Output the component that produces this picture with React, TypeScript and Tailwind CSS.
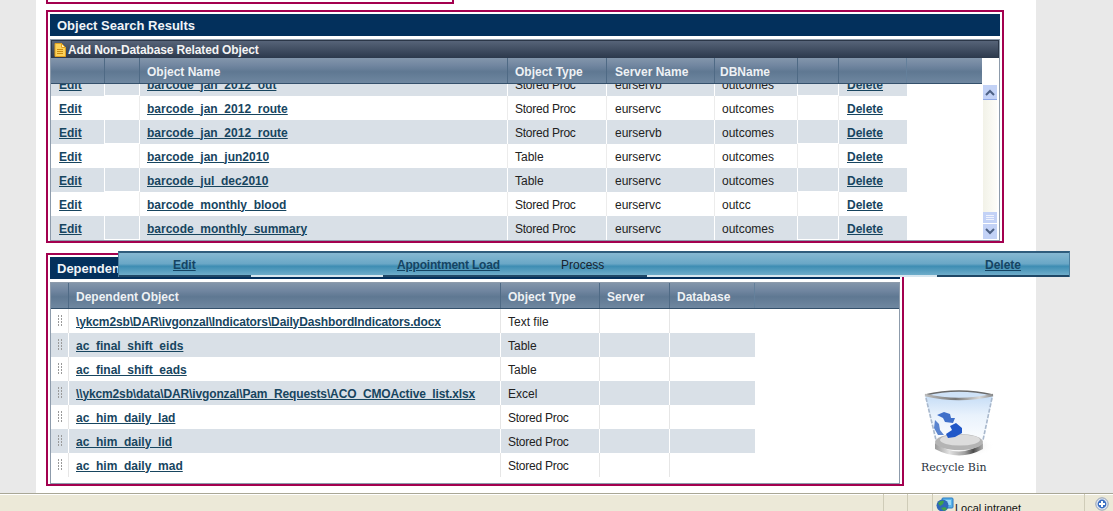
const headerBg = 'bg-[linear-gradient(#8396ab,#7186a0_30%,#5f7892_55%,#6f87a0)]';

const objects = [
  ['barcode_jan_2012_out', 'Stored Proc', 'eurservb', 'outcomes'],
  ['barcode_jan_2012_route', 'Stored Proc', 'eurservc', 'outcomes'],
  ['barcode_jan_2012_route', 'Stored Proc', 'eurservb', 'outcomes'],
  ['barcode_jan_jun2010', 'Table', 'eurservc', 'outcomes'],
  ['barcode_jul_dec2010', 'Table', 'eurservc', 'outcomes'],
  ['barcode_monthly_blood', 'Stored Proc', 'eurservc', 'outcc'],
  ['barcode_monthly_summary', 'Stored Proc', 'eurservc', 'outcomes'],
];

const dependents = [
  ['\\ykcm2sb\\DAR\\ivgonzal\\Indicators\\DailyDashbordIndicators.docx', 'Text file'],
  ['ac_final_shift_eids', 'Table'],
  ['ac_final_shift_eads', 'Table'],
  ['\\\\ykcm2sb\\data\\DAR\\ivgonzal\\Pam_Requests\\ACO_CMOActive_list.xlsx', 'Excel'],
  ['ac_him_daily_lad', 'Stored Proc'],
  ['ac_him_daily_lid', 'Stored Proc'],
  ['ac_him_daily_mad', 'Stored Proc'],
];

function typeClass(type: string) {
  return type === 'Stored Proc' ? 'tracking-[-0.25px]' : '';
}

function DocIcon() {
  return (
    <svg width="12" height="14" viewBox="0 0 12 14" className="mr-[2px] shrink-0">
      <path d="M1 .5h6.5L11.5 4.5V13.5H1Z" fill="#fbd25a" stroke="#e0a020" />
      <path d="M7.5 .5V4.5H11.5Z" fill="#fff2b8" stroke="#e0a020" />
      <path d="M3 6.5h6M3 8.5h6M3 10.5h6" stroke="#c98a10" strokeWidth="1" />
    </svg>
  );
}

function Grip() {
  const dots = [];
  for (let y = 0; y < 4; y++) {
    dots.push(<rect key={'a' + y} x="0" y={y * 3} width="1" height="2" fill="#9a9a9a" />);
    dots.push(<rect key={'b' + y} x="3" y={y * 3} width="1" height="2" fill="#9a9a9a" />);
  }
  return (
    <svg width="4" height="12" className="block">
      {dots}
    </svg>
  );
}

function Chevron({ up }: { up?: boolean }) {
  return (
    <svg width="10" height="7" viewBox="0 0 10 7">
      <path d={up ? 'M1 6l4-4 4 4' : 'M1 1l4 4 4-4'} fill="none" stroke="#4d6185" strokeWidth="2" />
    </svg>
  );
}

function Scrollbar() {
  return (
    <div className="flex w-[17px] flex-1 flex-col bg-white pl-px pr-[2px] pt-px">
      <div className="flex h-[15px] items-center justify-center border-b border-b-[#8fa8e6] bg-[#c3d2f6]">
        <Chevron up />
      </div>
      <div className="flex-1 bg-[linear-gradient(90deg,#f2f2e8,#fdfdf9)]" />
      <div className="flex h-[11px] flex-col justify-center gap-px bg-[#c3d2f6] px-[3px]">
        <div className="h-px bg-[#eef2fd]" />
        <div className="h-px bg-[#eef2fd]" />
        <div className="h-px bg-[#eef2fd]" />
      </div>
      <div className="mt-px mb-px flex h-[15px] items-center justify-center bg-[#c3d2f6]">
        <Chevron />
      </div>
    </div>
  );
}

function Title({ text }: { text: string }) {
  return (
    <div className="flex h-[22px] items-center bg-[#03305c] pl-[7px] pt-[2px] text-[13px] font-bold text-[#f0f4f8]">
      {text}
    </div>
  );
}

function HeaderCell({ w, text, pl = 'pl-2', line = 'border-r-[#4f6a85]' }: { w: string; text?: string; pl?: string; line?: string }) {
  return <div className={`${w} ${pl} ${line} flex h-full shrink-0 items-center border-r pt-[2px]`}>{text}</div>;
}

function ObjectResults() {
  return (
    <div className="h-[233px] w-[958px] shrink-0 border-2 border-[#a3004f] p-[2px]">
      <Title text="Object Search Results" />
      <div className="mt-[3px] h-[202px] border border-[#8d9bab]">
        <div className="flex h-[18px] items-center border-x border-t border-[#2b3647] bg-[linear-gradient(#566378,#2c394c)] pl-[2px] text-xs font-bold tracking-[-0.13px] text-[#f4f4f4]">
          <DocIcon />
          Add Non-Database Related Object
        </div>
        <div className="flex h-[182px]">
          <div className="flex w-[931px] flex-col">
            <div className={`flex h-[26px] shrink-0 border-b border-b-[#34506b] text-xs font-bold text-[#eef1f4] ${headerBg}`}>
              <HeaderCell w="w-[54px]" />
              <HeaderCell w="w-[35px]" />
              <HeaderCell w="w-[368px]" pl="pl-[7px]" text="Object Name" />
              <HeaderCell w="w-[99px]" pl="pl-[7px]" text="Object Type" />
              <HeaderCell w="w-[108px]" text="Server Name" />
              <HeaderCell w="w-[83px]" pl="pl-[5px]" text="DBName" />
              <HeaderCell w="w-[41px]" />
              <HeaderCell w="w-[68px]" line="border-r-[#64809b]" />
            </div>
            <div className="flex h-[156px] flex-col justify-end overflow-hidden text-xs text-[#222]">
              {objects.map((row, i) => {
                const alt = i % 2 === 0;
                const line = alt ? 'border-r-white' : 'border-r-[#ececec]';
                const cell = `flex h-full shrink-0 items-center border-r pt-px ${line}`;
                const link = 'font-bold text-[#17455f] underline';
                return (
                  <div key={i} className={`flex h-6 w-[856px] shrink-0 ${alt ? 'bg-[#d9e0e7]' : 'bg-white'}`}>
                    <div className={`flex h-full w-[54px] shrink-0 items-center border-r border-r-white pl-2 pt-px`}>
                      <span className={link}>Edit</span>
                    </div>
                    <div className={`${cell} w-[35px] ${alt ? 'border-b border-b-white' : ''}`} />
                    <div className={`${cell} w-[368px] pl-[7px]`}>
                      <span className={link}>{row[0]}</span>
                    </div>
                    <div className={`${cell} w-[99px] pl-[7px] ${typeClass(row[1])}`}>{row[1]}</div>
                    <div className={`${cell} w-[108px] pl-2`}>{row[2]}</div>
                    <div className={`${cell} w-[83px] pl-[7px]`}>{row[3]}</div>
                    <div className={`${cell} w-[41px] ${alt ? 'border-b border-b-white' : ''}`} />
                    <div className="flex h-full w-[68px] shrink-0 items-center pl-2 pt-px">
                      <span className={link}>Delete</span>
                    </div>
                  </div>
                );
              })}
            </div>
          </div>
          <div className="flex w-[17px] flex-col">
            <div className="h-[26px] shrink-0 bg-white" />
            <Scrollbar />
          </div>
        </div>
      </div>
    </div>
  );
}

function DependentObjects() {
  return (
    <div className="h-[233px] w-[858px] shrink-0 border-2 border-[#a3004f] p-[2px]">
      <Title text="Dependent Objects" />
      <div className="mt-[3px] h-[202px] w-[850px] border border-[#8d9bab]">
        <div className={`flex h-[26px] border-b border-b-[#34506b] text-xs font-bold text-[#eef1f4] ${headerBg}`}>
          <HeaderCell w="w-[18px]" />
          <HeaderCell w="w-[432px]" pl="pl-[7px]" text="Dependent Object" />
          <HeaderCell w="w-[99px]" pl="pl-[7px]" text="Object Type" />
          <HeaderCell w="w-[70px]" pl="pl-[7px]" text="Server" />
          <HeaderCell w="w-[85px]" pl="pl-[7px]" line="border-r-[#64809b]" text="Database" />
        </div>
        <div className="text-xs text-[#222]">
          {dependents.map((row, i) => {
            const alt = i % 2 === 1;
            const line = alt ? 'border-r-white' : 'border-r-[#e6e6e6]';
            const isPath = row[0].includes('\\');
            return (
              <div key={i} className={`flex h-6 w-[704px] ${alt ? 'bg-[#d9e0e7]' : 'bg-white'}`}>
                <div className={`flex h-full w-[18px] shrink-0 items-center justify-center border-r ${line}`}>
                  <Grip />
                </div>
                <div className={`flex h-full w-[432px] shrink-0 items-center border-r pl-[7px] pt-px ${line}`}>
                  <span className={`font-bold text-[#17455f] underline ${isPath ? 'tracking-[-0.13px]' : ''}`}>{row[0]}</span>
                </div>
                <div className={`flex h-full w-[99px] shrink-0 items-center border-r pl-[7px] pt-px ${line} ${typeClass(row[1])}`}>{row[1]}</div>
                <div className={`h-full w-[70px] shrink-0 border-r ${line}`} />
              </div>
            );
          })}
        </div>
      </div>
    </div>
  );
}

function RecycleBin() {
  return (
    <svg width="72" height="70" viewBox="0 0 72 70" className="block">
      <defs>
        <linearGradient id="glass" x1="0" y1="0" x2="0" y2="1">
          <stop offset="0" stopColor="#c4dcf6" />
          <stop offset="0.4" stopColor="#e9f2fc" />
          <stop offset="1" stopColor="#ffffff" />
        </linearGradient>
        <linearGradient id="metal" x1="0" y1="0" x2="1" y2="0">
          <stop offset="0" stopColor="#9a9a9a" />
          <stop offset="0.3" stopColor="#e2e2e2" />
          <stop offset="0.62" stopColor="#a0a0a0" />
          <stop offset="0.8" stopColor="#4c4c4c" />
          <stop offset="1" stopColor="#b0b0b0" />
        </linearGradient>
        <linearGradient id="rim" x1="0" y1="0" x2="1" y2="0">
          <stop offset="0" stopColor="#bdbdbd" />
          <stop offset="0.45" stopColor="#777" />
          <stop offset="0.8" stopColor="#d8d8d8" />
          <stop offset="1" stopColor="#8a8a8a" />
        </linearGradient>
        <radialGradient id="shade">
          <stop offset="0" stopColor="#cfcfcf" />
          <stop offset="1" stopColor="#ffffff" stopOpacity="0" />
        </radialGradient>
      </defs>
      <ellipse cx="44" cy="58" rx="27" ry="11" fill="url(#shade)" />
      <path d="M2 7L13 58H60L70 7Z" fill="url(#glass)" />
      <path d="M3 10L13 52M69 10L60 52" stroke="#a9b8cc" strokeWidth="1.6" strokeDasharray="4 1.5" fill="none" />
      <path d="M12 55Q36 72 60 55V61Q36 74 12 61Z" fill="url(#metal)" />
      <ellipse cx="36" cy="54" rx="24" ry="8" fill="#b4b4b4" />
      <ellipse cx="37" cy="52" rx="20" ry="5.5" fill="#dcdcdc" />
      <path d="M14 27L21 24L27 26L28 30L32 30L30 35L22 34L20 30Z" fill="#3f6fc9" />
      <path d="M12 32L16 36L17 42L21 47L15 47L11 40Z" fill="#5a84cf" />
      <path d="M23 46L29 42L27 38L33 35L39 40L39 45L32 49L25 50Z" fill="#2158c8" />
      <path d="M2 7Q36 -1 70 7Q36 15 2 7Z" fill="#cfe2f7" />
      <path d="M2 7Q36 -1 70 7" fill="none" stroke="#6a6a6a" strokeWidth="1.3" />
      <path d="M2 7Q36 15 70 7" fill="none" stroke="url(#rim)" strokeWidth="2.6" />
    </svg>
  );
}

function StatusGlobe() {
  return (
    <svg width="18" height="18" viewBox="0 0 18 18" className="shrink-0">
      <rect x="6" y="1" width="11" height="10" rx="1" fill="#5bb4ea" stroke="#2b78c0" />
      <rect x="8" y="3" width="7" height="5" fill="#9bd9f7" />
      <circle cx="6.5" cy="8.5" r="6" fill="#2f67b8" />
      <path d="M2 6q3-3 6-2l-1 3-3 2zM5 11l4-1 2 2-3 2z" fill="#3fa34a" />
    </svg>
  );
}

function ZoomIcon() {
  return (
    <svg width="15" height="15" viewBox="0 0 15 15" className="shrink-0">
      <circle cx="7" cy="7" r="6.2" fill="#dfe6f2" stroke="#93a0b5" />
      <circle cx="7" cy="7" r="4.4" fill="#3a6fc2" />
      <path d="M7 4v6M4 7h6" stroke="#fff" strokeWidth="2" />
    </svg>
  );
}

function DragRow() {
  const link = 'font-bold text-[#154463] underline';
  return (
    <div className="absolute left-[82px] top-[251px] flex h-[26px] w-[952px] border-x border-t-2 border-x-[#4c7f9f] border-t-[#2f5c7c] bg-[linear-gradient(#86b8d2,#6aa7c6_45%,#3e8db3_55%,#79b4cf)] text-xs text-[#17232e]">
      <div className="flex h-full w-[132px] shrink-0 items-center border-b-2 border-b-[#1f4766] pl-[54px] pt-[2px]">
        <span className={link}>Edit</span>
      </div>
      <div className="h-full w-[132px] shrink-0 border-b-2 border-b-[#d6e6ef]" />
      <div className="flex h-full w-[264px] shrink-0 items-center border-b-2 border-b-[#1f4766] pl-[14px] pt-[2px]">
        <span className={`${link} w-[164px] shrink-0 tracking-[-0.2px]`}>Appointment Load</span>
        <span>Process</span>
      </div>
      <div className="h-full w-[290px] shrink-0 border-b-2 border-b-[#d6e6ef]" />
      <div className="flex h-full flex-1 items-center border-b-2 border-b-[#1f4766] pl-[48px] pt-[2px]">
        <span className={link}>Delete</span>
      </div>
    </div>
  );
}

export default function App() {
  return (
    <div className="flex h-[511px] w-[1113px] flex-col overflow-hidden bg-[#e9e9e9] font-['Liberation_Sans',Arial,sans-serif]">
      <div className="relative ml-9 flex h-[493px] w-[1000px] shrink-0 flex-col bg-white pl-[10px]">
        <div className="h-1 w-[408px] border-x-2 border-b-2 border-[#a3004f]" />
        <div className="mt-[6px]">
          <ObjectResults />
        </div>
        <div className="mt-[10px] flex">
          <DependentObjects />
          <div className="ml-[17px] flex w-[76px] flex-col items-start pt-[135px]">
            <div className="ml-[2px]">
              <RecycleBin />
            </div>
            <span className="mt-[2px] font-['DejaVu_Serif',serif] text-[11px] whitespace-nowrap text-[#2c3440]">Recycle Bin</span>
          </div>
        </div>
        <DragRow />
      </div>
      <div className="flex h-[18px] shrink-0 border-t border-t-[#a9a796] bg-[#ece9d8] shadow-[inset_0_1px_0_#fff]">
        <div className="w-[883px] shrink-0" />
        <div className="w-6 shrink-0 border-l border-l-[#cfccb8]" />
        <div className="w-[25px] shrink-0 border-l border-l-[#cfccb8]" />
        <div className="flex w-[152px] shrink-0 items-start gap-[1px] border-l border-l-[#cfccb8] pl-[3px] pt-[3px] text-[11px] leading-[22px] text-[#111]">
          <StatusGlobe />
          <span className="whitespace-nowrap">Local intranet</span>
        </div>
        <div className="flex-1 border-l border-l-[#cfccb8] pl-[10px] pt-[3px]">
          <ZoomIcon />
        </div>
      </div>
    </div>
  );
}
